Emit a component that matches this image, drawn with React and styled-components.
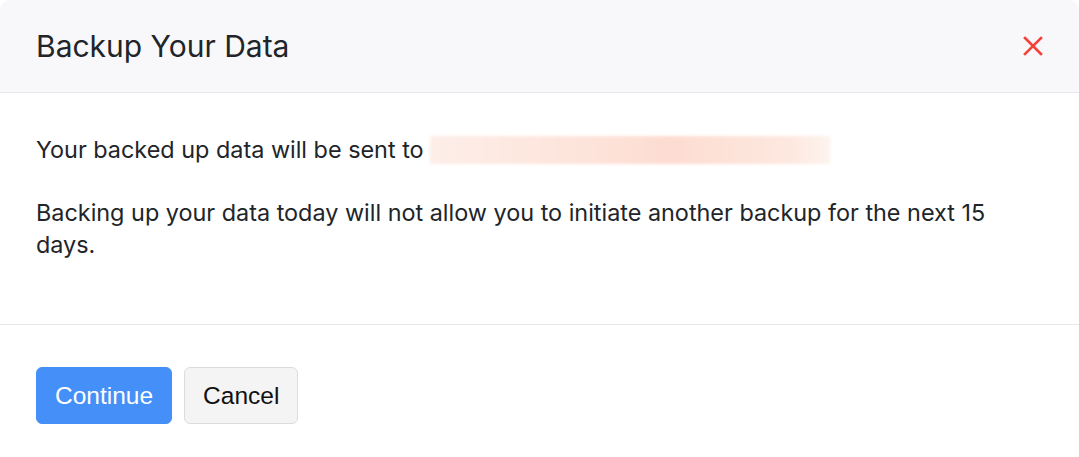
import styled, { createGlobalStyle } from "styled-components";

const GlobalStyle = createGlobalStyle`
  html, body {
    margin: 0;
    padding: 0;
    background: #ffffff;
  }
  body {
    font-family: Inter, "Noto Sans", sans-serif;
    color: #212529;
  }
`;

const Modal = styled.div`
  width: 1079px;
  background: #ffffff;
  border-radius: 10px 10px 0 0;
  overflow: hidden;
`;

const Header = styled.div`
  height: 92px;
  display: flex;
  align-items: center;
  justify-content: space-between;
  padding: 0 36px;
  background: #f8f8fa;
  border-bottom: 1px solid #e8e8ec;
`;

const Title = styled.h2`
  margin: 0;
  font-size: 30px;
  font-weight: 400;
  color: #212529;
`;

const CloseButton = styled.button`
  border: none;
  background: none;
  padding: 0;
  width: 24px;
  height: 24px;
  display: flex;
  align-items: center;
  justify-content: center;
  cursor: pointer;
  margin-right: -2px;
`;

const Body = styled.div`
  padding: 41px 36px 32px;
  border-bottom: 1px solid #e8e8ec;
`;

const Text = styled.p`
  margin: 0 0 31px;
  font-size: 23.4px;
  line-height: 32px;
  color: #212529;
`;

const Redacted = styled.span`
  display: inline-block;
  vertical-align: middle;
  width: 400px;
  height: 28px;
  margin-left: 6px;
  margin-top: -4px;
  background: linear-gradient(90deg, #fdeee8 0%, #fde3da 40%, #fddcd1 60%, #fde8e0 90%, #fef3ef 100%);
  filter: blur(1.5px);
`;

const Footer = styled.div`
  display: flex;
  gap: 12px;
  padding: 42px 36px 34px;
`;

const Button = styled.button`
  height: 57px;
  padding: 0 18px;
  border-radius: 6px;
  font-family: "Liberation Sans", Arial, sans-serif;
  font-size: 24.5px;
  cursor: pointer;
  border: 1px solid ${(p) => (p.$primary ? "#4490f8" : "#dcdcdc")};
  background: ${(p) => (p.$primary ? "#4490f8" : "#f4f4f4")};
  color: ${(p) => (p.$primary ? "#ffffff" : "#111111")};
`;

export default function App() {
  return (
    <>
      <GlobalStyle />
      <Modal>
        <Header>
          <Title>Backup Your Data</Title>
          <CloseButton aria-label="Close">
            <svg width="20" height="20" viewBox="0 0 20 20">
              <path d="M2 2 L18 18 M18 2 L2 18" stroke="#f4423a" strokeWidth="2.6" strokeLinecap="square" />
            </svg>
          </CloseButton>
        </Header>
        <Body>
          <Text>
            Your backed up data will be sent to
            <Redacted />
          </Text>
          <Text>
            Backing up your data today will not allow you to initiate another backup for the next 15 days.
          </Text>
        </Body>
        <Footer>
          <Button $primary>Continue</Button>
          <Button>Cancel</Button>
        </Footer>
      </Modal>
    </>
  );
}
